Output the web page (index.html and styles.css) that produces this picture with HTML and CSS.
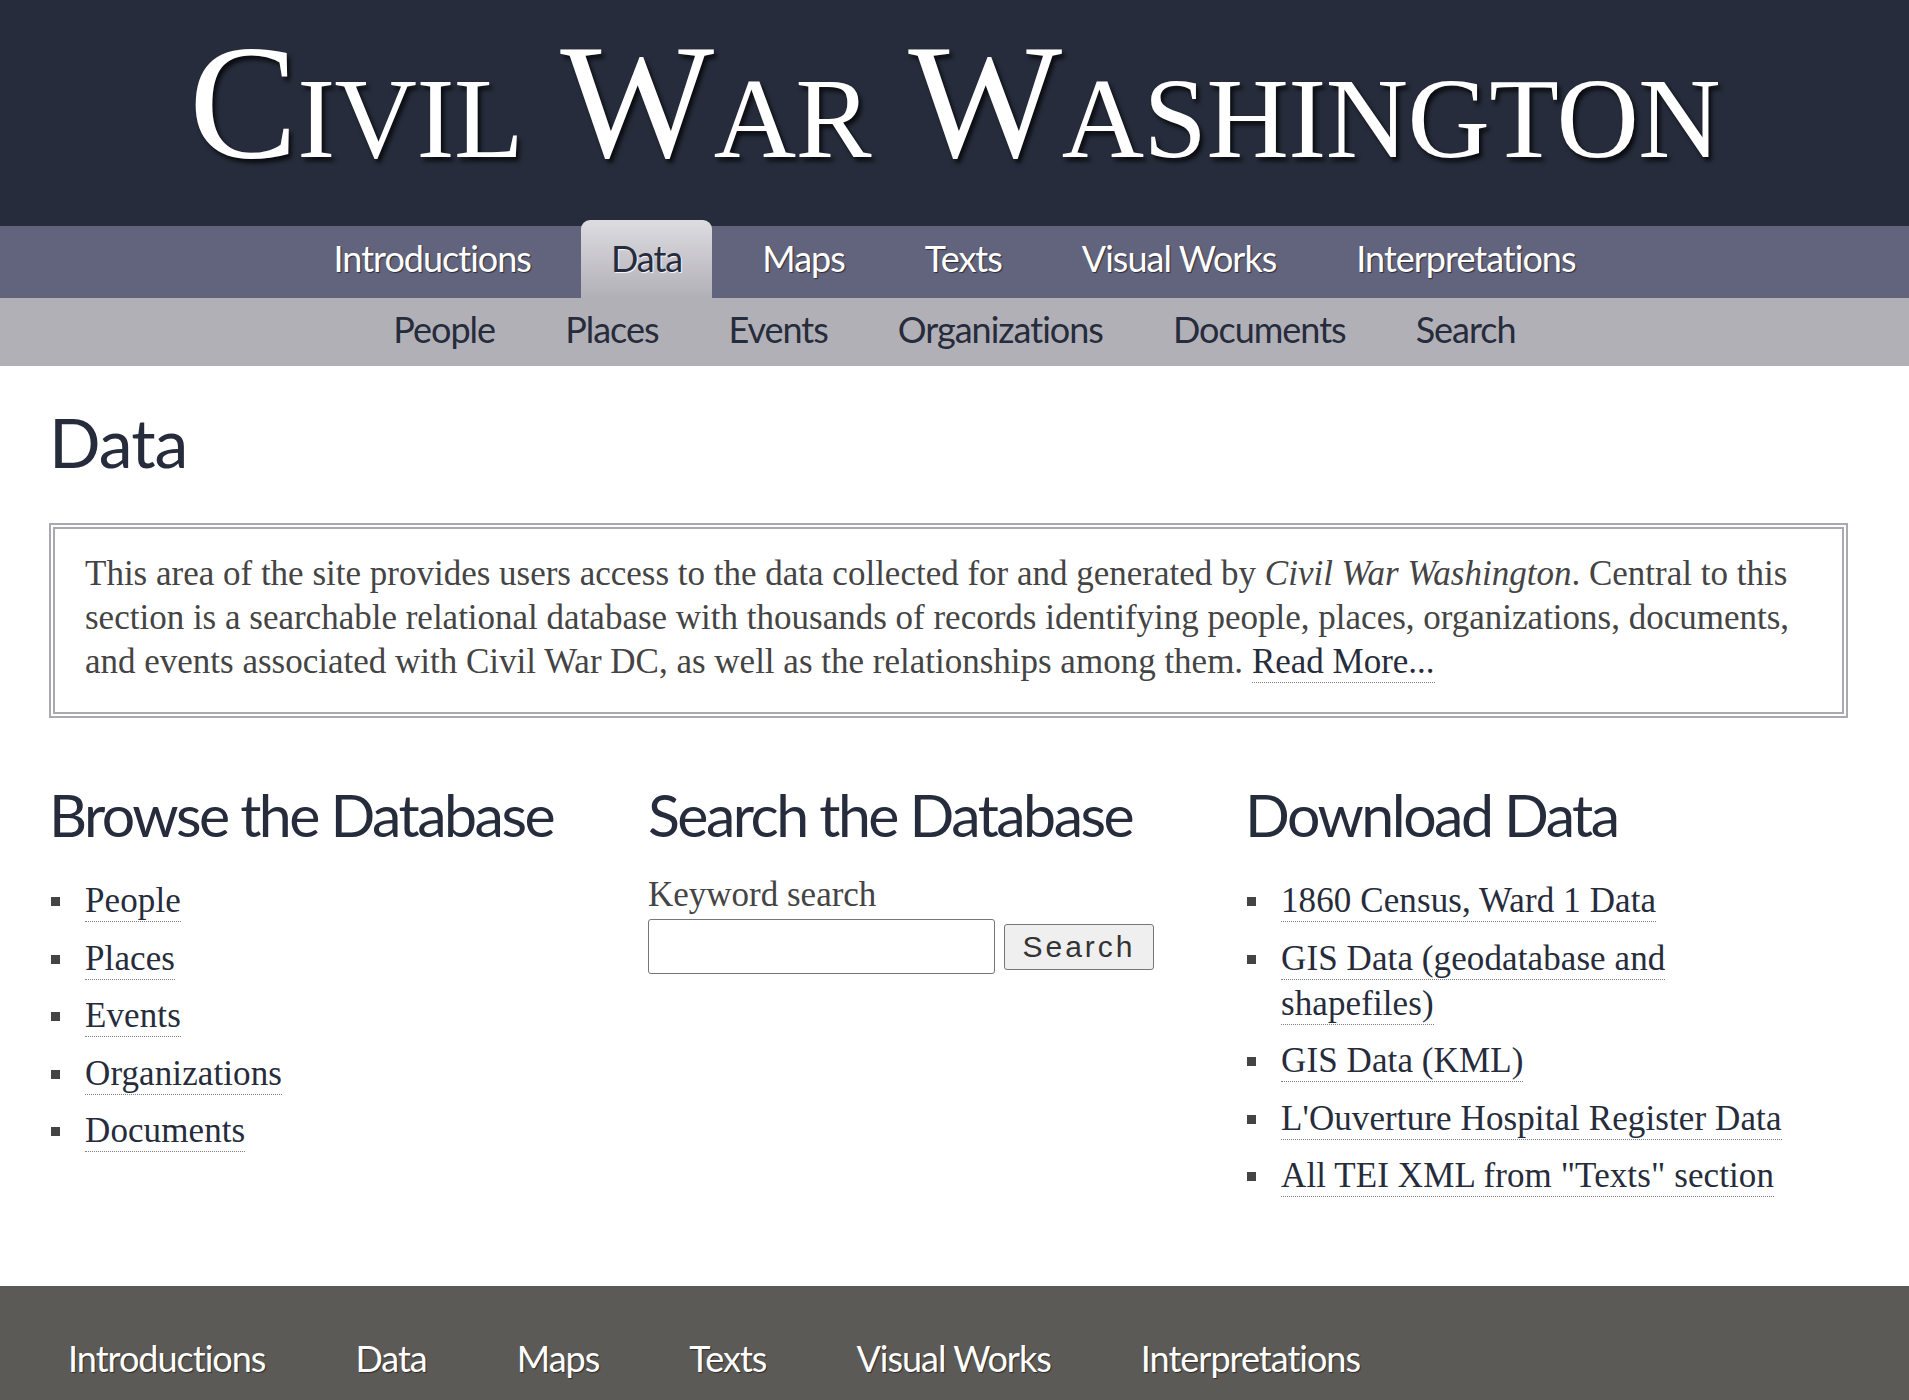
FILE: index.html
```html
<!DOCTYPE html>
<html lang="en">
<head>
<meta charset="utf-8">
<title>Data | Civil War Washington</title>
<link rel="stylesheet" href="styles.css">
</head>
<body>
<header class="masthead">
  <div class="site-title">Civil War Washington</div>
</header>
<nav class="main-nav">
  <ul class="main-nav-list">
    <li class="main-nav-item"><a href="#">Introductions</a></li>
    <li class="main-nav-item is-active"><a href="#">Data</a></li>
    <li class="main-nav-item"><a href="#">Maps</a></li>
    <li class="main-nav-item"><a href="#">Texts</a></li>
    <li class="main-nav-item"><a href="#">Visual Works</a></li>
    <li class="main-nav-item"><a href="#">Interpretations</a></li>
  </ul>
</nav>
<nav class="sub-nav">
  <ul class="sub-nav-list">
    <li><a href="#">People</a></li>
    <li><a href="#">Places</a></li>
    <li><a href="#">Events</a></li>
    <li><a href="#">Organizations</a></li>
    <li><a href="#">Documents</a></li>
    <li><a href="#">Search</a></li>
  </ul>
</nav>
<main class="content">
  <h1 class="page-title">Data</h1>
  <div class="intro-box">
    <p class="intro-text">This area of the site provides users access to the data collected for and generated by <em>Civil War Washington</em>. Central to this section is a searchable relational database with thousands of records identifying people, places, organizations, documents, and events associated with Civil War DC, as well as the relationships among them. <a class="dotted-link" href="#">Read More...</a></p>
  </div>
  <div class="columns">
    <section class="column">
      <h2 class="column-title">Browse the Database</h2>
      <ul class="link-list">
        <li><a class="dotted-link" href="#">People</a></li>
        <li><a class="dotted-link" href="#">Places</a></li>
        <li><a class="dotted-link" href="#">Events</a></li>
        <li><a class="dotted-link" href="#">Organizations</a></li>
        <li><a class="dotted-link" href="#">Documents</a></li>
      </ul>
    </section>
    <section class="column">
      <h2 class="column-title">Search the Database</h2>
      <form class="search-form">
        <label class="search-label" for="kw">Keyword search</label>
        <div class="search-row">
          <input class="search-input" id="kw" type="text">
          <button class="search-button" type="button">Search</button>
        </div>
      </form>
    </section>
    <section class="column">
      <h2 class="column-title">Download Data</h2>
      <ul class="link-list download-list">
        <li><a class="dotted-link" href="#">1860 Census, Ward 1 Data</a></li>
        <li><a class="dotted-link" href="#">GIS Data (geodatabase and shapefiles)</a></li>
        <li><a class="dotted-link" href="#">GIS Data (KML)</a></li>
        <li><a class="dotted-link" href="#">L'Ouverture Hospital Register Data</a></li>
        <li><a class="dotted-link" href="#">All TEI XML from "Texts" section</a></li>
      </ul>
    </section>
  </div>
</main>
<footer class="site-footer">
  <ul class="footer-list">
    <li><a href="#">Introductions</a></li>
    <li><a href="#">Data</a></li>
    <li><a href="#">Maps</a></li>
    <li><a href="#">Texts</a></li>
    <li><a href="#">Visual Works</a></li>
    <li><a href="#">Interpretations</a></li>
  </ul>
</footer>
</body>
</html>
```

FILE: styles.css
```css
* { box-sizing: border-box; }

html, body {
  margin: 0;
  padding: 0;
  background: #ffffff;
}

body {
  font-family: "Liberation Serif", "Times New Roman", serif;
  color: #444444;
}

a { text-decoration: none; color: inherit; }

ul { list-style: none; margin: 0; padding: 0; }

/* ---------- masthead ---------- */
.masthead {
  height: 226px;
  background: #262c3b;
  padding-top: 21px;
  text-align: center;
}

.site-title {
  font-family: "Liberation Serif", "Times New Roman", serif;
  font-variant: small-caps;
  font-size: 163px;
  line-height: 162px;
  color: #ffffff;
  letter-spacing: -0.5px;
  text-shadow: 3px 4px 4px rgba(0, 0, 0, 0.75);
}

/* ---------- shared sans font ---------- */
.main-nav,
.sub-nav,
.site-footer,
.page-title,
.column-title {
  font-family: "Lato", "Liberation Sans", sans-serif;
}

/* ---------- main nav ---------- */
.main-nav {
  height: 72px;
  background: #62637c;
}

.main-nav-list {
  display: flex;
  justify-content: center;
  gap: 20px;
  height: 72px;
}

.main-nav-item {
  padding: 0 30px 8px;
  font-size: 36px;
  line-height: 64px;
  letter-spacing: -1px;
  color: #ffffff;
  text-shadow: 1px 1px 1px rgba(0, 0, 0, 0.55);
}

.main-nav-item.is-active {
  margin-top: -6px;
  padding-top: 6px;
  border-radius: 9px 9px 0 0;
  background: linear-gradient(#dddce1, #b2b0b7);
  color: #262c3b;
  text-shadow: 1px 1px 1px rgba(255, 255, 255, 0.9);
}

/* ---------- sub nav ---------- */
.sub-nav {
  height: 68px;
  background: #b2b0b7;
}

.sub-nav-list {
  display: flex;
  justify-content: center;
  gap: 70px;
}

.sub-nav-list li {
  font-size: 36px;
  line-height: 62px;
  letter-spacing: -1px;
  color: #262c3b;
}

/* ---------- content ---------- */
.content {
  width: 1799px;
  margin-left: 49px;
  padding-top: 36px;
  padding-bottom: 88px;
}

.page-title {
  margin: 0;
  font-weight: normal;
  font-size: 68px;
  line-height: 80px;
  letter-spacing: -1px;
  color: #262c3b;
}

.intro-box {
  margin-top: 41px;
  border: 6px double #a9a9af;
  padding: 23px 30px 28px 30px;
}

.intro-text {
  margin: 0;
  font-size: 35px;
  line-height: 44px;
  letter-spacing: 0;
  color: #444444;
}

.intro-text em { font-style: italic; }

.dotted-link {
  color: #262c3b;
  padding-bottom: 1px;
  border-bottom: 1px dotted #7d7d85;
}

/* ---------- columns ---------- */
.columns {
  display: grid;
  grid-template-columns: 599px 597px 1fr;
  margin-top: 61px;
}

.column-title {
  margin: 0;
  font-weight: normal;
  font-size: 59px;
  line-height: 72px;
  letter-spacing: -2.5px;
  color: #262c3b;
  white-space: nowrap;
}

.link-list {
  margin-top: 27px;
}

.link-list li {
  padding-left: 36px;
  font-size: 35px;
  line-height: 45px;
  letter-spacing: 0.1px;
}

.link-list li + li {
  margin-top: 12.5px;
}

.link-list li::before {
  content: "";
  display: inline-block;
  width: 9px;
  height: 9px;
  background: #444444;
  margin-left: -34px;
  margin-right: 25px;
  vertical-align: 6px;
}

.download-list {
  width: 561px;
}

/* ---------- search ---------- */
.search-form {
  margin-top: 21px;
}

.search-label {
  display: block;
  font-size: 35px;
  line-height: 45px;
  color: #444444;
}

.search-row {
  display: flex;
  align-items: center;
  gap: 9px;
  margin-top: 2px;
}

.search-input {
  width: 347px;
  height: 55px;
  border: 1px solid #767676;
  border-radius: 3px;
  background: #ffffff;
  padding: 0 6px;
  font-size: 28px;
}

.search-button {
  width: 150px;
  height: 46px;
  border: 1px solid #767676;
  border-radius: 3px;
  background: #efefef;
  font-family: "Liberation Sans", Arial, sans-serif;
  font-size: 30px;
  letter-spacing: 3px;
  color: #333333;
  padding: 0;
}

/* ---------- footer ---------- */
.site-footer {
  background: #5b5a56;
  padding: 40px 0 60px 68px;
}

.footer-list {
  display: flex;
  gap: 90px;
}

.footer-list li {
  font-size: 36px;
  line-height: 64px;
  letter-spacing: -1px;
  color: #ffffff;
  text-shadow: 1px 1px 1px rgba(0, 0, 0, 0.5);
}
```
